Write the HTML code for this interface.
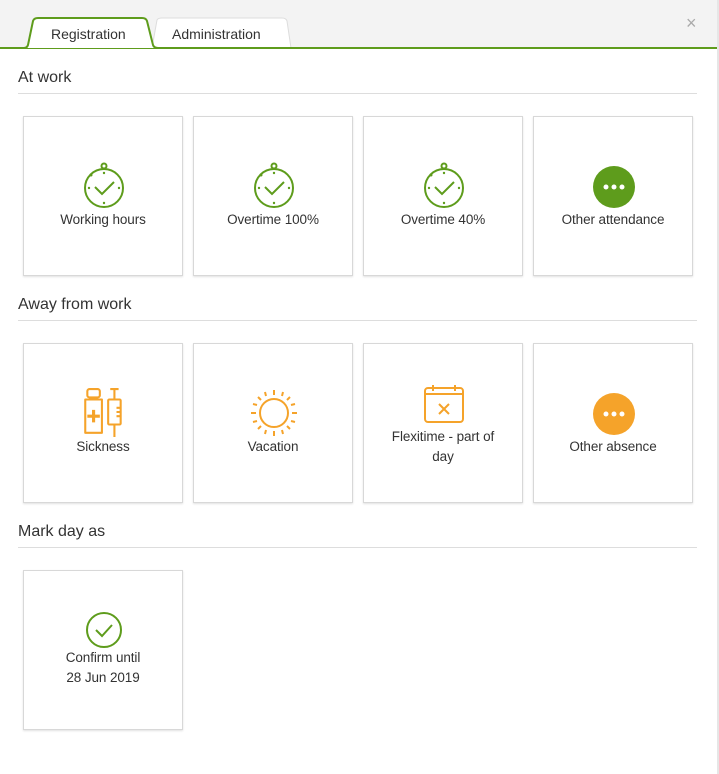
<!DOCTYPE html>
<html><head><style>
body{margin:0;width:719px;height:774px;background:#fff;font-family:"Liberation Sans",sans-serif;color:#333;position:relative;overflow:hidden}
.top{position:absolute;left:0;top:0;width:719px;height:47px;background:#f3f3f3;border-bottom:2px solid #5e9c1c}
.rb{position:absolute;right:0;top:0;width:2px;height:774px;background:#e6e6e6}
.h{position:absolute;left:18px;width:679px;font-size:16px;color:#333;border-bottom:1px solid #ddd;height:24px}
.c{position:absolute;width:158px;height:158px;border:1px solid #d8d8d8;box-shadow:0 1px 2px rgba(0,0,0,.12);background:#fff;text-align:center;font-size:13.5px;line-height:20px;letter-spacing:-0.1px}
.c svg{position:absolute;left:58px;top:46px;overflow:visible}
.c .t{position:absolute;left:0;right:0;top:93px}
.x{position:absolute;left:686px;top:13px;font-size:18px;color:#aaa}
</style></head><body>
<div class="top"></div>
<svg style="position:absolute;left:0;top:14px" width="300" height="36">
<path d="M152 34 L157 6 Q158 4 162 4 L282 4 Q286 4 287 7 L291 34" fill="#fff" stroke="#ddd" stroke-width="1"/>
<path d="M0 34 L24 34 Q27 34 28 31 L33 7 Q34 4 38 4 L142 4 Q146 4 147 7 L153 31 Q154 34 158 34 L300 34" fill="#fff" stroke="#5e9c1c" stroke-width="2"/>
<text x="51" y="25" font-size="14" fill="#333" font-family="Liberation Sans">Registration</text>
<text x="172" y="25" font-size="14" fill="#333" font-family="Liberation Sans">Administration</text>
</svg>
<div class="x">×</div>
<div class="rb"></div>

<div class="h" style="top:69px">At work</div>
<div class="h" style="top:296px">Away from work</div>
<div class="h" style="top:523px">Mark day as</div>

<!-- row 1 -->
<div class="c" style="left:23px;top:116px"><svg width="44" height="48" viewBox="0 0 44 48"><g fill="none" stroke="#5e9c1c" stroke-width="2"><circle cx="22" cy="25" r="19"/><circle cx="22" cy="3" r="2.5"/><path d="M13 24l7 7 12-12"/></g><g fill="#5e9c1c"><circle cx="22" cy="10" r="1.2"/><circle cx="22" cy="40" r="1.2"/><circle cx="7" cy="25" r="1.2"/><circle cx="37" cy="25" r="1.2"/><circle cx="9" cy="12" r="1.5"/></g></svg><div class="t">Working hours</div></div>
<div class="c" style="left:193px;top:116px"><svg width="44" height="48" viewBox="0 0 44 48"><g fill="none" stroke="#5e9c1c" stroke-width="2"><circle cx="22" cy="25" r="19"/><circle cx="22" cy="3" r="2.5"/><path d="M13 24l7 7 12-12"/></g><g fill="#5e9c1c"><circle cx="22" cy="10" r="1.2"/><circle cx="22" cy="40" r="1.2"/><circle cx="7" cy="25" r="1.2"/><circle cx="37" cy="25" r="1.2"/><circle cx="9" cy="12" r="1.5"/></g></svg><div class="t">Overtime 100%</div></div>
<div class="c" style="left:363px;top:116px"><svg width="44" height="48" viewBox="0 0 44 48"><g fill="none" stroke="#5e9c1c" stroke-width="2"><circle cx="22" cy="25" r="19"/><circle cx="22" cy="3" r="2.5"/><path d="M13 24l7 7 12-12"/></g><g fill="#5e9c1c"><circle cx="22" cy="10" r="1.2"/><circle cx="22" cy="40" r="1.2"/><circle cx="7" cy="25" r="1.2"/><circle cx="37" cy="25" r="1.2"/><circle cx="9" cy="12" r="1.5"/></g></svg><div class="t">Overtime 40%</div></div>
<div class="c" style="left:533px;top:116px"><svg width="44" height="48" viewBox="0 0 44 48"><circle cx="22" cy="24" r="21" fill="#5e9c1c"/><g fill="#fff"><circle cx="14" cy="24" r="2.5"/><circle cx="22" cy="24" r="2.5"/><circle cx="30" cy="24" r="2.5"/></g></svg><div class="t">Other attendance</div></div>

<!-- row 2 -->
<div class="c" style="left:23px;top:343px"><svg width="46" height="50" viewBox="0 0 44 48" style="left:57px;top:43px"><g fill="none" stroke="#f5a32a" stroke-width="2"><rect x="6" y="2" width="12" height="8" rx="2"/><path d="M4 12h16v32H4z" stroke-linejoin="round"/><path d="M12 22v12M6 28h12" stroke-width="3"/><rect x="26" y="12" width="12" height="24" rx="1"/><path d="M32 2v10M28 2h8M32 36v12M34 20h4M34 24h4M34 28h4"/></g></svg><div class="t">Sickness</div></div>
<div class="c" style="left:193px;top:343px"><svg width="50" height="50" viewBox="0 0 50 50" style="left:55px;top:44px"><g fill="none" stroke="#f5a32a" stroke-width="2"><circle cx="25" cy="25" r="14"/><path d="M25 2v5M25 43v5M2 25h5M43 25h5M9 9l3 3M38 38l3 3M41 9l-3 3M12 38l-3 3M16 4l1 4M34 4l-1 4M16 46l1-4M34 46l-1-4M4 16l4 1M4 34l4-1M46 16l-4 1M46 34l-4-1"/></g></svg><div class="t">Vacation</div></div>
<div class="c" style="left:363px;top:343px"><svg width="42" height="42" viewBox="0 0 42 42" style="left:59px;top:40px"><g fill="none" stroke="#f5a32a" stroke-width="2"><rect x="2" y="4" width="38" height="34" rx="3"/><path d="M2 10h38M10 1v6M32 1v6M16 20l10 10M26 20l-10 10"/></g></svg><div class="t" style="top:83px">Flexitime - part of<br>day</div></div>
<div class="c" style="left:533px;top:343px"><svg width="44" height="48" viewBox="0 0 44 48"><circle cx="22" cy="24" r="21" fill="#f5a32a"/><g fill="#fff"><circle cx="14" cy="24" r="2.5"/><circle cx="22" cy="24" r="2.5"/><circle cx="30" cy="24" r="2.5"/></g></svg><div class="t">Other absence</div></div>

<!-- row 3 -->
<div class="c" style="left:23px;top:570px"><svg width="38" height="38" viewBox="0 0 38 38" style="left:61px;top:40px"><g fill="none" stroke="#5e9c1c" stroke-width="2"><circle cx="19" cy="19" r="17"/><path d="M11 19l6 6 10-11"/></g></svg><div class="t" style="top:77px">Confirm until<br>28 Jun 2019</div></div>
</body></html>
